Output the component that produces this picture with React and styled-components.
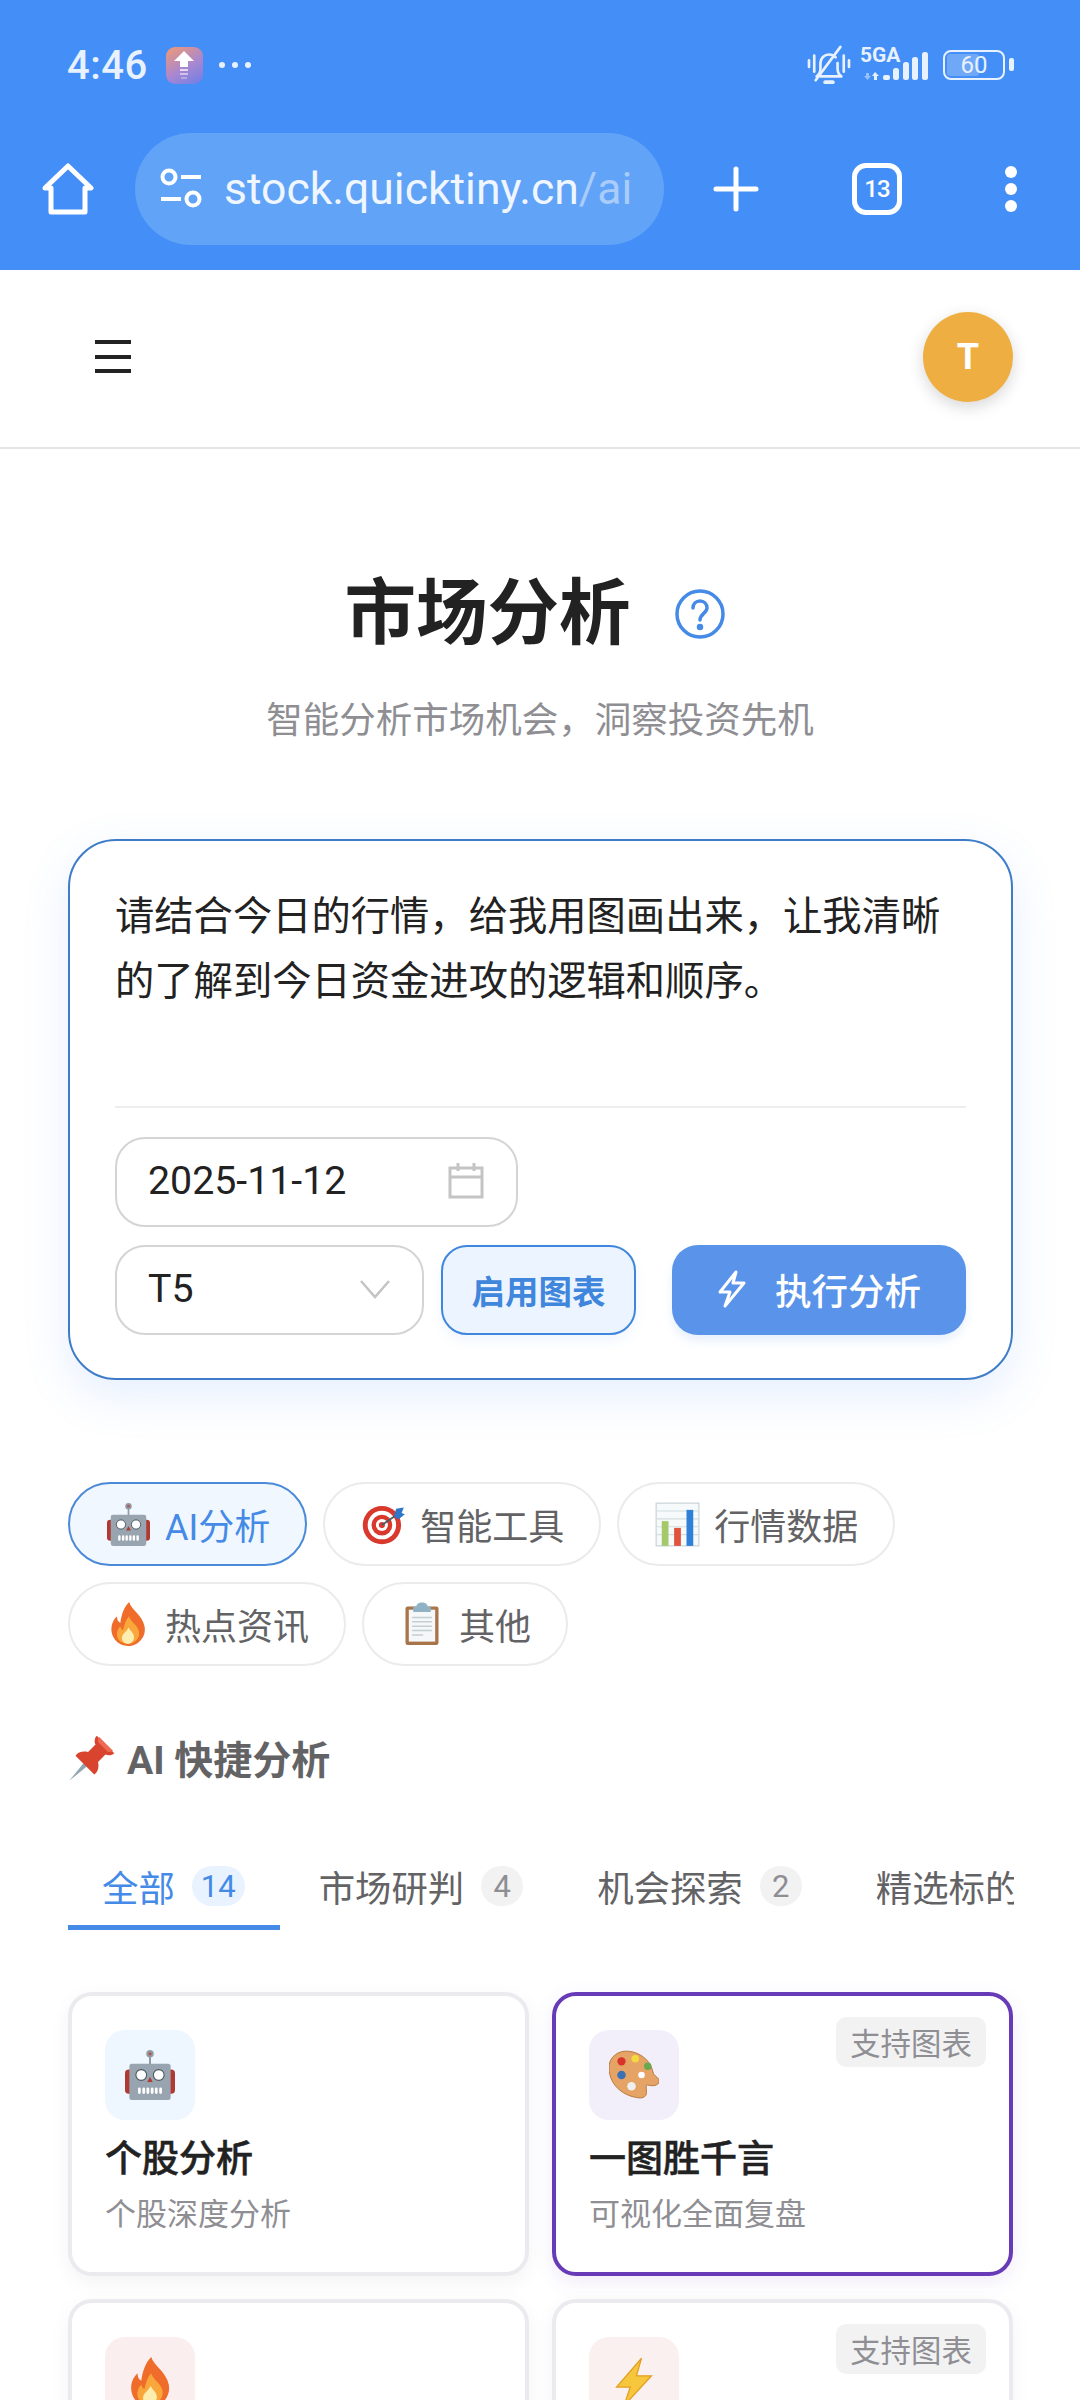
import styled, { createGlobalStyle } from "styled-components";

const Global = createGlobalStyle`
  html, body { margin: 0; padding: 0; background: #fff; }
  body { font-family: Roboto, "Noto Sans CJK SC", sans-serif; }
  * { box-sizing: border-box; }
`;

const Page = styled.div`
  width: 1080px;
  height: 2400px;
  overflow: hidden;
  background: #fff;
`;

const BrowserChrome = styled.div`
  height: 270px;
  background: #448ef7;
  color: #fff;
`;

const StatusBar = styled.div`
  height: 130px;
  padding: 0 75px 0 67px;
  display: flex;
  align-items: center;
  justify-content: space-between;
`;

const StatusLeft = styled.div`
  display: flex;
  align-items: center;
`;

const Clock = styled.span`
  font-size: 40px;
  font-weight: 500;
  color: #e8f1fe;
  letter-spacing: 0.5px;
`;

const AppBadge = styled.div`
  width: 37px;
  height: 37px;
  margin-left: 18px;
  border-radius: 9px;
  background: linear-gradient(150deg, #f19a72 0%, #a987d0 55%, #6c7fe8 100%);
  display: flex;
  align-items: center;
  justify-content: center;
`;

const MoreDots = styled.span`
  margin-left: 16px;
  display: flex;
  gap: 7px;
`;

const MoreDot = styled.i`
  width: 6px;
  height: 6px;
  border-radius: 50%;
  background: #e8f1fe;
`;

const StatusRight = styled.div`
  display: flex;
  align-items: center;
`;

const Toolbar = styled.div`
  height: 112px;
  margin-top: 3px;
  padding: 0 26px 0 42px;
  display: flex;
  align-items: center;
`;

const UrlPill = styled.div`
  width: 529px;
  height: 112px;
  margin-left: 41px;
  padding-left: 24px;
  border-radius: 56px;
  background: #60a3f7;
  display: flex;
  align-items: center;
  font-size: 44.5px;
  white-space: nowrap;
`;

const UrlText = styled.span`
  margin-left: 21px;
  color: #f0f6ff;
`;

const UrlPath = styled.span`
  color: #a9ccfb;
`;

const ToolSlot = styled.div`
  width: ${(p) => p.$w}px;
  margin-left: ${(p) => p.$ml}px;
  display: flex;
  justify-content: center;
`;

const TopNav = styled.div`
  height: 179px;
  padding: 0 67px 4px 95px;
  border-bottom: 2px solid #e6e6e8;
  display: flex;
  align-items: center;
  justify-content: space-between;
`;

const Burger = styled.div`
  width: 36px;
  height: 33px;
  display: flex;
  flex-direction: column;
  justify-content: space-between;
`;

const BurgerLine = styled.i`
  height: 4px;
  background: #222;
`;

const Avatar = styled.div`
  width: 90px;
  height: 90px;
  border-radius: 50%;
  background: #efae42;
  color: #fff;
  font-size: 36px;
  font-weight: 700;
  display: flex;
  align-items: center;
  justify-content: center;
  box-shadow: 0 5px 16px rgba(0, 0, 0, 0.16);
`;

const Hero = styled.div`
  padding-top: 123px;
  text-align: center;
`;

const TitleRow = styled.div`
  height: 84px;
  padding-right: 11px;
  display: flex;
  align-items: center;
  justify-content: center;
  gap: 44px;
`;

const Title = styled.h1`
  margin: 0;
  font-size: 71.5px;
  line-height: 84px;
  font-weight: 700;
  color: #222;
`;

const Subtitle = styled.p`
  margin: 40px 0 0;
  font-size: 36.5px;
  line-height: 50px;
  color: #8e8e93;
`;

const QueryCard = styled.div`
  width: 945px;
  height: 541px;
  margin: 93px 0 0 68px;
  padding: 44px 45px 0;
  border: 2px solid #3f7cc8;
  border-radius: 48px;
  background: #fff;
  box-shadow: 0 16px 48px rgba(68, 142, 247, 0.14);
`;

const QueryText = styled.div`
  height: 223px;
  font-size: 39.3px;
  line-height: 65px;
  color: #222;
  border-bottom: 2px solid #eeeeef;
`;

const Field = styled.div`
  width: ${(p) => p.$w}px;
  height: 90px;
  padding: 0 32px 2px 31px;
  border: 2px solid #d4d4d6;
  border-radius: 30px;
  background: #fff;
  font-size: 39.3px;
  color: #222;
  display: flex;
  align-items: center;
  justify-content: space-between;
`;

const DateRow = styled.div`
  margin-top: 29px;
`;

const ActionRow = styled.div`
  margin-top: 18px;
  display: flex;
  align-items: center;
`;

const ChartToggle = styled.div`
  width: 195px;
  height: 90px;
  margin-left: 17px;
  padding-bottom: 2px;
  border: 2px solid #3f86dc;
  border-radius: 26px;
  background: #ecf5ff;
  color: #3f86dc;
  font-size: 33.5px;
  font-weight: 700;
  display: flex;
  align-items: center;
  justify-content: center;
  box-shadow: 0 6px 12px rgba(68, 142, 247, 0.08);
`;

const RunButton = styled.div`
  width: 294px;
  height: 90px;
  margin-left: 36px;
  padding-bottom: 2px;
  border-radius: 26px;
  background: #5a94ea;
  color: #fff;
  font-size: 36.5px;
  font-weight: 500;
  display: flex;
  align-items: center;
  justify-content: center;
  gap: 28px;
  box-shadow: 0 6px 10px rgba(90, 148, 234, 0.14);
`;

const ChipWrap = styled.div`
  margin: 102px 0 0 68px;
  width: 946px;
  display: flex;
  flex-wrap: wrap;
  gap: 16px;
`;

const Chip = styled.div`
  height: 84px;
  padding: 0 35px;
  border: 2px solid ${(p) => (p.$active ? "#4a8ad8" : "#ebebed")};
  border-radius: 42px;
  background: ${(p) => (p.$active ? "#f0f7ff" : "#fff")};
  color: ${(p) => (p.$active ? "#448ae6" : "#636366")};
  font-size: 36px;
  display: flex;
  align-items: center;
  gap: 14px;
`;

const ChipIcon = styled.span`
  width: 46px;
  height: 46px;
  display: flex;
  align-items: center;
  justify-content: center;
`;

const SectionTitle = styled.h2`
  margin: 66px 0 0 68px;
  height: 50px;
  display: flex;
  align-items: center;
  gap: 9px;
  font-size: 39px;
  font-weight: 700;
  color: #636366;
`;

const Tabs = styled.div`
  margin: 72px 0 0 68px;
  width: 946px;
  height: 76px;
  display: flex;
  gap: 5px;
  overflow: hidden;
`;

const Tab = styled.div`
  flex: none;
  height: 76px;
  padding: 0 35px 7px 34px;
  border-bottom: 5px solid ${(p) => (p.$active ? "#448ae6" : "transparent")};
  color: ${(p) => (p.$active ? "#448ae6" : "#636366")};
  font-size: 36.4px;
  display: flex;
  align-items: center;
  gap: 17px;
  white-space: nowrap;
`;

const TabCount = styled.span`
  min-width: 42px;
  height: 40px;
  padding: 0 9px;
  border-radius: 20px;
  background: ${(p) => (p.$active ? "#e8f3ff" : "#f2f2f3")};
  color: ${(p) => (p.$active ? "#448ae6" : "#8e8e93")};
  font-size: 31px;
  display: flex;
  align-items: center;
  justify-content: center;
`;

const CardGrid = styled.div`
  margin: 62px 0 0 68px;
  width: 946px;
  display: grid;
  grid-template-columns: 461px 461px;
  gap: 23px;
`;

const ToolCard = styled.div`
  position: relative;
  height: 284px;
  padding: 34px 33px 0;
  border: 4px solid ${(p) => (p.$selected ? "#673ab7" : "#ebebef")};
  border-radius: 24px;
  background: #fff;
  box-shadow: 0 6px 20px ${(p) => (p.$selected ? "rgba(103, 58, 183, 0.1)" : "rgba(0, 0, 0, 0.05)")};
`;

const IconTile = styled.div`
  width: 90px;
  height: 90px;
  border-radius: 20px;
  background: ${(p) => p.$bg};
  display: flex;
  align-items: center;
  justify-content: center;
`;

const CardName = styled.div`
  margin-top: 15px;
  font-size: 37px;
  line-height: 50px;
  font-weight: 500;
  -webkit-text-stroke: 0.5px #222;
  color: #222;
`;

const CardDesc = styled.div`
  margin-top: 9px;
  font-size: 31px;
  line-height: 42px;
  color: #8e8e93;
`;

const ChartTag = styled.span`
  position: absolute;
  top: 21px;
  right: 23px;
  width: 150px;
  height: 50px;
  border-radius: 10px;
  background: #f2f2f3;
  color: #8e8e93;
  font-size: 30.4px;
  display: flex;
  align-items: center;
  justify-content: center;
`;

const Robot = ({ s }) => (
  <svg width={s} height={s} viewBox="0 0 40 40">
    <circle cx="20" cy="3" r="3" fill="#8f9ba5" />
    <circle cx="20" cy="3" r="1.300" fill="#b5564f" />
    <rect x="19.200" y="5" width="1.600" height="7" fill="#8f9ba5" />
    <rect x="0" y="15.500" width="40" height="19.500" rx="3" fill="#b03a32" />
    <rect x="3.500" y="11" width="33" height="29" rx="2" fill="#98a5b0" />
    <circle cx="13" cy="20" r="4.300" fill="#fff" stroke="#4f5961" strokeWidth="0.900" />
    <circle cx="27" cy="20" r="4.300" fill="#fff" stroke="#4f5961" strokeWidth="0.900" />
    <path d="M20 21.500 22.200 25.500H17.800z" fill="#b03a32" />
    <path d="M11.500 31v3M15 31v3M18.300 31v3M21.700 31v3M25 31v3M28.500 31v3" stroke="#fff" strokeWidth="2.200" strokeLinecap="round" />
  </svg>
);

const Target = ({ s }) => (
  <svg width={s} height={s} viewBox="-2 0 42 40">
    <circle cx="18" cy="21" r="17.500" fill="#d8392c" />
    <circle cx="18" cy="21" r="13" fill="#fff" />
    <circle cx="18" cy="21" r="9.500" fill="#d8392c" />
    <circle cx="18" cy="21" r="5.500" fill="#fff" />
    <circle cx="18" cy="21" r="2.800" fill="#d8392c" />
    <path d="M18 21 34 10" stroke="#4d5a63" strokeWidth="1.600" />
    <path d="M29 13l2-7 7-1-2 5 3 1-6 5z" fill="#2f75c8" />
  </svg>
);

const BarChart = ({ s }) => (
  <svg width={s} height={s} viewBox="0 0 40 40">
    <rect x="1" y="1" width="38" height="38" fill="#f7fafa" stroke="#c5d0d4" strokeWidth="1" />
    <path d="M1 8h38M1 15h38M1 22h38M1 29h38" stroke="#d4dde0" strokeWidth="1" />
    <rect x="6" y="17" width="6" height="22" fill="#a5c96a" />
    <rect x="17" y="23" width="6" height="16" fill="#e0533c" />
    <rect x="28" y="7" width="6" height="32" fill="#2f80d8" />
  </svg>
);

const Fire = ({ s }) => (
  <svg width={s} height={s} viewBox="0 0 40 40">
    <path d="M21 0c2 7 12 12 14 22 2 10-6 18-15 18S4 32 5 23c.6-5 3-8 5-10 0 3 1 5 3 6 1-7 3-14 8-19z" fill="#ef6c2a" />
    <path d="M21 13c1 5 8 8 9 14 1 6-4 11-10 11s-11-4-10-10c.5-3 2-5 3-6 .5 2 1 3 2.500 3.500C17 20 18 16 21 13z" fill="#f9a63a" />
    <path d="M20.500 23c1 3 5 5 5 9 0 3-2.500 6-5.500 6s-6-2.500-5.500-6c.3-3 4.500-5 6-9z" fill="#fdeeb0" />
  </svg>
);

const Clipboard = ({ s }) => (
  <svg width={s} height={s} viewBox="0 0 40 40">
    <rect x="5" y="4" width="30" height="35" rx="2" fill="#a8744a" />
    <rect x="8" y="7" width="24" height="29" fill="#f5f7f8" />
    <path d="M15 4c0-2 2-3.500 5-3.500S25 2 25 4h3v5H12V4z" fill="#8fb3c4" />
    <path d="M11 14h18M11 18h18M11 22h18M11 26h18M11 30h10" stroke="#c4ced3" strokeWidth="1.400" />
  </svg>
);

const Pin = ({ s }) => (
  <svg width={s} height={s} viewBox="0 0 40 40">
    <path d="M1 39 14 23l3 3z" fill="#8fa6b2" />
    <path d="M23 3 37 17c-2 2-5 2-7 1l-6 6c1 4 0 8-3 10L6 19c2-3 6-4 10-3l6-6c-1-2-1-5 1-7z" fill="#d9442f" />
    <path d="M25 4 36 15c-1 1-3 1-4 1L24 8c0-2 0-3 1-4z" fill="#ef6a52" />
  </svg>
);

const Palette = ({ s }) => (
  <svg width={s} height={s} viewBox="0 -1 40 40">
    <path d="M12 0C22-1 33 6 35 16c1 5 5 4 5 8s-6 4-9 3c-2-.5-1 3-1 6 0 4-4 5-8 4C10 35 0 26 0 13 0 6 5 1 12 0z" fill="#e5a365" stroke="#b87a3c" strokeWidth="0.800" />
    <circle cx="10" cy="8" r="3.300" fill="#d9342c" />
    <circle cx="21" cy="6" r="3" fill="#f5d93c" />
    <circle cx="31" cy="12" r="3" fill="#6aa84f" />
    <circle cx="10" cy="19" r="3.400" fill="#3b70b5" />
    <circle cx="26" cy="19" r="2.600" fill="#fff" />
    <circle cx="18" cy="28" r="3.400" fill="#eef0f0" />
  </svg>
);

const Bolt = ({ s }) => (
  <svg width={s} height={s} viewBox="0 0 40 40">
    <path d="M26 1 6 24h11l-5 15 22-24H22z" fill="#f6c63d" stroke="#e39f21" strokeWidth="1" />
  </svg>
);

const BellOff = () => (
  <svg width="44" height="40" viewBox="0 0 46 42" fill="none" stroke="#e8f1fe" strokeWidth="2.800" strokeLinecap="round" strokeLinejoin="round">
    <path d="M2 16v7M44 16v7M7.500 11v17M38.500 11v17" />
    <path d="M10 33c3-2 4-4 4-8v-6c0-5 4-9 9-9 3 0 5 1 7 3M32 19v6c0 4 1 6 4 8H14" />
    <path d="M9 37 35 2" />
    <path d="M19 39h8" strokeWidth="4" />
  </svg>
);

const Signal = () => (
  <svg width="70" height="44" viewBox="0 0 70 44" fill="#e8f1fe">
    <path d="M6 30h3v3h2l-3.500 4L4 33h2z" opacity="0.5" />
    <path d="M15 29l4 4h-2v4h-3v-4h-2z" />
    <rect x="23" y="32" width="7" height="5" rx="2" />
    <rect x="33" y="25" width="6" height="12" rx="2.500" />
    <rect x="43" y="19" width="6" height="18" rx="2.500" />
    <rect x="52" y="14" width="6" height="23" rx="2.500" />
    <rect x="62" y="9" width="6" height="28" rx="2.500" />
  </svg>
);

const FiveGA = styled.span`
  position: absolute;
  top: 2px;
  left: 0;
  font-size: 21px;
  line-height: 21px;
  font-weight: 700;
  color: #e8f1fe;
`;

const NetGroup = styled.div`
  position: relative;
  width: 70px;
  height: 44px;
  margin-left: 9px;
`;

const Battery = styled.div`
  position: relative;
  width: 62px;
  height: 30px;
  margin-left: 13px;
  border: 2.500px solid #e8f1fe;
  border-radius: 8px;
  padding: 2px;
  &::after {
    content: "";
    position: absolute;
    right: -11px;
    top: 6px;
    width: 5px;
    height: 13px;
    border-radius: 2px;
    background: #e8f1fe;
  }
`;

const BatteryFill = styled.div`
  width: 60%;
  height: 100%;
  border-radius: 3px;
  background: #70a8f8;
`;

const BatteryText = styled.span`
  position: absolute;
  inset: 0;
  font-size: 24px;
  color: #e8f1fe;
  display: flex;
  align-items: center;
  justify-content: center;
`;

const TabNumber = styled.span`
  position: absolute;
  inset: 0;
  font-size: 24px;
  font-weight: 500;
  letter-spacing: -1px;
  display: flex;
  align-items: center;
  justify-content: center;
`;

const TabBox = styled.div`
  position: relative;
  width: 50px;
  height: 52px;
  border: 5px solid #fff;
  border-radius: 14px;
`;

const Kebab = styled.div`
  height: 46px;
  display: flex;
  flex-direction: column;
  justify-content: space-between;
`;

const KebabDot = styled.i`
  width: 12px;
  height: 12px;
  border-radius: 50%;
  background: #fff;
`;

const chips = [
  { label: "AI分析", Icon: Robot, size: 43, active: true },
  { label: "智能工具", Icon: Target, size: 48 },
  { label: "行情数据", Icon: BarChart, size: 45 },
  { label: "热点资讯", Icon: Fire, size: 44 },
  { label: "其他", Icon: Clipboard, size: 44 },
];

const tabs = [
  { label: "全部", count: 14, active: true },
  { label: "市场研判", count: 4 },
  { label: "机会探索", count: 2 },
  { label: "精选标的", count: 3 },
];

const cards = [
  { name: "个股分析", desc: "个股深度分析", Icon: Robot, bg: "#eef6ff" },
  { name: "一图胜千言", desc: "可视化全面复盘", Icon: Palette, bg: "#f2effb", selected: true, tag: true },
  { name: "热点追踪", desc: "追踪市场热点", Icon: Fire, bg: "#fbeeee" },
  { name: "涨停分析", desc: "涨停板块复盘", Icon: Bolt, bg: "#fbf0f0", tag: true },
];

export default function App() {
  return (
    <Page>
      <Global />
      <BrowserChrome>
        <StatusBar>
          <StatusLeft>
            <Clock>4:46</Clock>
            <AppBadge>
              <svg width="22" height="30" viewBox="0 0 22 30" fill="#fff">
                <path d="M11 1 21 11H15V17H7V11H1z" />
                <rect x="7" y="19" width="8" height="2" opacity="0.7" />
                <rect x="7" y="23" width="8" height="2" opacity="0.5" />
                <rect x="8" y="27" width="6" height="2" opacity="0.3" />
              </svg>
            </AppBadge>
            <MoreDots>
              <MoreDot />
              <MoreDot />
              <MoreDot />
            </MoreDots>
          </StatusLeft>
          <StatusRight>
            <BellOff />
            <NetGroup>
              <FiveGA>5GA</FiveGA>
              <Signal />
            </NetGroup>
            <Battery>
              <BatteryFill />
              <BatteryText>60</BatteryText>
            </Battery>
          </StatusRight>
        </StatusBar>
        <Toolbar>
          <svg width="52" height="52" viewBox="0 0 52 52" fill="none" stroke="#fff" strokeWidth="5" strokeLinejoin="round" strokeLinecap="round">
            <path d="M3 25 26 3l23 22h-6v24H9V25z" />
          </svg>
          <UrlPill>
            <svg width="44" height="44" viewBox="0 0 44 44" fill="none" stroke="#fff" strokeWidth="4">
              <circle cx="10" cy="10" r="6.500" />
              <path d="M22 10h20M2 32h20" />
              <circle cx="34" cy="32" r="6.500" />
            </svg>
            <UrlText>
              stock.quicktiny.cn<UrlPath>/ai</UrlPath>
            </UrlText>
          </UrlPill>
          <ToolSlot $w={46} $ml={49}>
            <svg width="46" height="46" viewBox="0 0 46 46" stroke="#fff" strokeWidth="5" strokeLinecap="round">
              <path d="M23 3v40M3 23h40" />
            </svg>
          </ToolSlot>
          <ToolSlot $w={50} $ml={93}>
            <TabBox>
              <TabNumber>13</TabNumber>
            </TabBox>
          </ToolSlot>
          <ToolSlot $w={14} $ml={102}>
            <Kebab>
              <KebabDot />
              <KebabDot />
              <KebabDot />
            </Kebab>
          </ToolSlot>
        </Toolbar>
      </BrowserChrome>

      <TopNav>
        <Burger>
          <BurgerLine />
          <BurgerLine />
          <BurgerLine />
        </Burger>
        <Avatar>T</Avatar>
      </TopNav>

      <Hero>
        <TitleRow>
          <Title>市场分析</Title>
          <svg width="50" height="50" viewBox="0 0 50 50" fill="none" stroke="#448ae6" strokeWidth="3.500" strokeLinecap="round">
            <circle cx="25" cy="25" r="23" />
            <path d="M18 19c0-4 3-7 7-7s7 3 7 7c0 5-7 6-7 12" />
            <circle cx="25" cy="38" r="1.500" fill="#448ae6" />
          </svg>
        </TitleRow>
        <Subtitle>智能分析市场机会，洞察投资先机</Subtitle>
      </Hero>

      <QueryCard>
        <QueryText>请结合今日的行情，给我用图画出来，让我清晰的了解到今日资金进攻的逻辑和顺序。</QueryText>
        <DateRow>
          <Field $w={403}>
            2025-11-12
            <svg width="36" height="36" viewBox="0 0 36 36" fill="none" stroke="#c4c4c6" strokeWidth="3">
              <rect x="2" y="5" width="32" height="29" />
              <path d="M2 14h32M10 0v8M26 0v8" />
            </svg>
          </Field>
        </DateRow>
        <ActionRow>
          <Field $w={309}>
            T5
            <svg width="30" height="20" viewBox="0 0 30 20" fill="none" stroke="#c4c4c6" strokeWidth="2.500">
              <path d="M1 2 15 18 29 2" />
            </svg>
          </Field>
          <ChartToggle>启用图表</ChartToggle>
          <RunButton>
            <svg width="30" height="38" viewBox="0 0 30 38" fill="none" stroke="#fff" strokeWidth="3" strokeLinejoin="round">
              <path d="M19 2 3 22h10L8 36 27 13H16z" />
            </svg>
            执行分析
          </RunButton>
        </ActionRow>
      </QueryCard>

      <ChipWrap>
        {chips.map(({ label, Icon, size, active }) => (
          <Chip key={label} $active={active}>
            <ChipIcon>
              <Icon s={size} />
            </ChipIcon>
            {label}
          </Chip>
        ))}
      </ChipWrap>

      <SectionTitle>
        <Pin s={50} />
        AI 快捷分析
      </SectionTitle>

      <Tabs>
        {tabs.map((t) => (
          <Tab key={t.label} $active={t.active}>
            {t.label}
            <TabCount $active={t.active}>{t.count}</TabCount>
          </Tab>
        ))}
      </Tabs>

      <CardGrid>
        {cards.map(({ name, desc, Icon, bg, selected, tag }) => (
          <ToolCard key={name} $selected={selected}>
            {tag && <ChartTag>支持图表</ChartTag>}
            <IconTile $bg={bg}>
              <Icon s={50} />
            </IconTile>
            <CardName>{name}</CardName>
            <CardDesc>{desc}</CardDesc>
          </ToolCard>
        ))}
      </CardGrid>
    </Page>
  );
}
